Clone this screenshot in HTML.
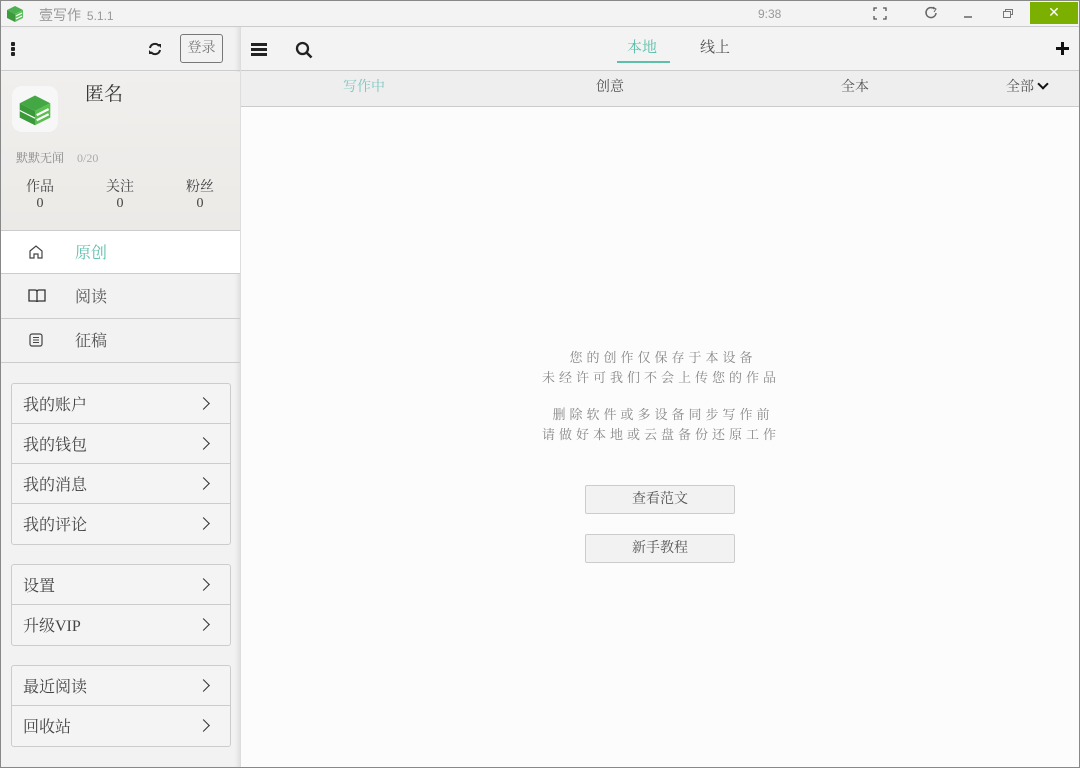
<!DOCTYPE html>
<html><head><meta charset="utf-8"><style>
*{margin:0;padding:0;box-sizing:border-box}
body{width:1080px;height:768px;overflow:hidden;background:#fcfcfc;font-family:"Liberation Serif","Noto Serif CJK SC",serif;position:relative;}
.abs{position:absolute}
.t{font-family:"Liberation Sans","Noto Sans CJK SC",sans-serif}
#title{left:0;top:0;width:1080px;height:27px;background:#f3f3f3;border-bottom:1px solid #ccc}
#side{left:0;top:27px;width:241px;height:741px;background:#f2f2f2;border-right:1px solid #ddd;box-shadow:inset -4px 0 4px -2px #ddd}
.nav{position:absolute;left:0;width:240px;height:44px;border-bottom:1px solid #ccc;font-size:16px;color:#555}
.nav span{position:absolute;left:75px;top:9px}
.nav svg{position:absolute;left:28px;top:13px}
.box{position:absolute;left:11px;width:220px;border:1px solid #ccc;border-radius:3px;background:#f4f4f4}
.row{height:40px;border-bottom:1px solid #ccc;font-size:16px;color:#444;padding:8px 0 0 11px;position:relative}
.row:last-child{border-bottom:none}
.row:after{content:"";position:absolute;right:22px;top:15px;width:8px;height:8px;border-top:1.8px solid #333;border-right:1.8px solid #333;transform:rotate(45deg)}
.msg{left:242px;width:838px;text-align:center;font-size:13px;color:#888;letter-spacing:4px;text-indent:4px}
.btn{left:585px;width:150px;height:29px;border:1px solid #ccc;border-radius:2px;background:#f2f2f2;font-size:14px;color:#555;text-align:center;line-height:27px}
</style></head><body>
<div id="title" class="abs">
<svg class="abs" style="left:5px;top:4px" width="20" height="20" viewBox="0 0 20 20"><path d="M2 6 L10 2 L18 6 L10 10Z" fill="#4caf50"/><path d="M2 6 L10 10 L10 18 L2 14Z" fill="#3d9a3d"/><path d="M10 10 L18 6 L18 14 L10 18Z" fill="#5cc05c"/><path d="M11 12 L17 9 M11 15 L17 12" stroke="#fff" stroke-width="1.2"/></svg>
<div class="abs t" style="left:39px;top:5px;font-size:14px;color:#999">壹写作 <span style="font-size:12px;margin-left:2px">5.1.1</span></div>
<div class="abs t" style="left:758px;top:7px;font-size:12px;color:#999">9:38</div>
<svg class="abs" style="left:873px;top:7px" width="14" height="13"><path d="M1 4V1h3M10 1h3v3M13 9v3h-3M4 12H1V9" fill="none" stroke="#555" stroke-width="1.3"/></svg>
<svg class="abs" style="left:924px;top:6px" width="14" height="14"><path d="M10.5 3A5 5 0 1 0 12 7" fill="none" stroke="#666" stroke-width="1.5"/><path d="M9 1l3 2-2 3" fill="none" stroke="#666" stroke-width="1"/></svg>
<div class="abs" style="left:964px;top:16px;width:8px;height:1.5px;background:#888"></div>
<svg class="abs" style="left:1003px;top:9px" width="10" height="9"><path d="M2.5 2.5V.5h7v5h-2M.5 2.5h7v6h-7z" fill="none" stroke="#777"/></svg>
<div class="abs" style="left:1030px;top:2px;width:48px;height:22px;background:#7cb000;color:#fff;text-align:center;font:bold 14px/22px 'DejaVu Sans',sans-serif">✕</div>
</div>
<div id="side" class="abs">
<div class="abs" style="left:0;top:0;width:240px;height:44px;border-bottom:1px solid #ccc">
<div class="abs" style="left:11px;top:15px;width:4px;height:4px;background:#222;box-shadow:0 5px 0 #222,0 10px 0 #222;border-radius:1px"></div>
<svg class="abs" style="left:148px;top:15px" width="14" height="14" viewBox="0 0 14 14"><path d="M2 6A5 5 0 0 1 11 4M12 8A5 5 0 0 1 3 10" fill="none" stroke="#222" stroke-width="2"/><path d="M9 2h4v4zM5 12H1V8z" fill="#222"/></svg>
<div class="abs" style="left:180px;top:7px;width:43px;height:29px;border:1px solid #777;border-radius:3px;font-size:14px;color:#777;text-align:center;line-height:27px">登录</div>
</div>
<div class="abs" style="left:0;top:45px;width:240px;height:159px;background:linear-gradient(180deg,#f0efed,#eceae7)">
<div class="abs" style="left:12px;top:14px;width:46px;height:46px;background:#f7f7f7;border-radius:10px"></div>
<svg class="abs" style="left:18px;top:20px" width="34" height="36" viewBox="0 0 20 20"><path d="M1 6 L10 1.5 L19 6 L10 10.5Z" fill="#43a843"/><path d="M1 6 L10 10.5 L10 19 L1 14.5Z" fill="#3a9a3a"/><path d="M10 10.5 L19 6 L19 14.5 L10 19Z" fill="#5bbf4f"/><path d="M11 13 L18 9.5 M11 16 L18 12.5" stroke="#fff" stroke-width="1.3"/><path d="M1 10.3 L10 14.8" stroke="#fff" stroke-width=".7"/></svg>
<div class="abs" style="left:85px;top:7px;font-size:19px;color:#333">匿名</div>
<div class="abs" style="left:16px;top:77px;font-size:12px;color:#888">默默无闻 <span style="color:#aaa;margin-left:10px">0/20</span></div>
<div class="abs" style="left:26px;top:108px;font-size:14px;color:#444;text-align:center;line-height:16px">作品<br>0</div>
<div class="abs" style="left:106px;top:108px;font-size:14px;color:#444;text-align:center;line-height:16px">关注<br>0</div>
<div class="abs" style="left:186px;top:108px;font-size:14px;color:#444;text-align:center;line-height:16px">粉丝<br>0</div>
</div>
<div class="nav" style="top:203px;border-top:1px solid #ccc;background:#fff"><svg width="16" height="16" viewBox="0 0 16 16"><path d="M2 7L8 2l6 5v7h-4v-4H6v4H2z" fill="none" stroke="#444" stroke-width="1.2"/></svg><span style="color:#5bbfaa">原创</span></div>
<div class="nav" style="top:248px"><svg width="18" height="16" viewBox="0 0 18 16"><path d="M1 2h6q2 0 2 2v10q0-1-2-1H1zM17 2h-6q-2 0-2 2v10q0-1 2-1h6z" fill="none" stroke="#333" stroke-width="1.3"/></svg><span>阅读</span></div>
<div class="nav" style="top:292px"><svg width="16" height="16" viewBox="0 0 16 16"><rect x="2" y="2" width="12" height="12" rx="2" fill="none" stroke="#444" stroke-width="1.2"/><path d="M5 5.5h6M5 8h6M5 10.5h6" stroke="#444"/></svg><span>征稿</span></div>
<div class="box" style="top:356px"><div class="row">我的账户</div><div class="row">我的钱包</div><div class="row">我的消息</div><div class="row">我的评论</div></div>
<div class="box" style="top:537px"><div class="row">设置</div><div class="row">升级VIP</div></div>
<div class="box" style="top:638px"><div class="row">最近阅读</div><div class="row">回收站</div></div>
</div>
<div class="abs" style="left:241px;top:27px;width:839px;height:44px;background:#f3f3f3;border-bottom:1px solid #ccc">
<div class="abs" style="left:10px;top:16px;width:16px;height:2.5px;background:#222;box-shadow:0 5px 0 #222,0 10px 0 #222"></div>
<svg class="abs" style="left:54px;top:14px" width="18" height="18"><circle cx="7.5" cy="7.5" r="5.5" fill="none" stroke="#222" stroke-width="2.3"/><path d="M11.5 11.5l5 5" stroke="#222" stroke-width="2.6"/></svg>
<div class="abs" style="left:386px;top:9px;font-size:15px;color:#5bbfaa">本地</div>
<div class="abs" style="left:376px;top:34px;width:53px;height:2px;background:#5bbfaa"></div>
<div class="abs" style="left:459px;top:9px;font-size:15px;color:#555">线上</div>
<div class="abs" style="left:815px;top:20px;width:13px;height:3px;background:#111"></div><div class="abs" style="left:820px;top:15px;width:3px;height:13px;background:#111"></div>
</div>
<div class="abs" style="left:241px;top:71px;width:839px;height:36px;background:#eeeeee;border-bottom:1px solid #ccc;font-size:14px">
<div class="abs" style="left:102px;top:5px;color:#7cc6c0">写作中</div>
<div class="abs" style="left:355px;top:5px;color:#555">创意</div>
<div class="abs" style="left:600px;top:5px;color:#555">全本</div>
<div class="abs" style="left:765px;top:5px;color:#555">全部</div>
<div class="abs" style="left:798px;top:9px;width:8px;height:8px;border-right:2.5px solid #111;border-bottom:2.5px solid #111;transform:rotate(45deg)"></div>
</div>
<div class="abs msg" style="top:348px;line-height:20px">您的创作仅保存于本设备<br>未经许可我们不会上传您的作品</div>
<div class="abs msg" style="top:405px;line-height:20px">删除软件或多设备同步写作前<br>请做好本地或云盘备份还原工作</div>
<div class="abs btn" style="top:485px">查看范文</div>
<div class="abs btn" style="top:534px">新手教程</div>
<div class="abs" style="left:0;top:0;width:1080px;height:768px;border:1px solid #888;pointer-events:none"></div>
</body></html>
